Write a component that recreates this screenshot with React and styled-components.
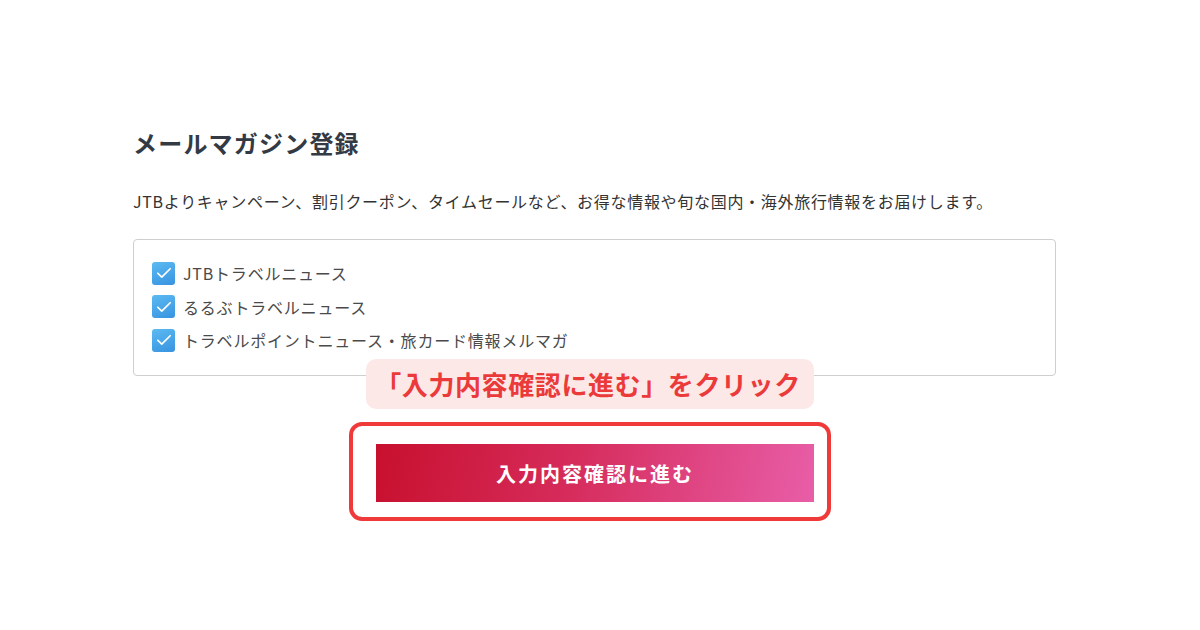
import React from 'react';
import styled, { createGlobalStyle } from 'styled-components';

const GlobalStyle = createGlobalStyle`
  body {
    margin: 0;
    background: #fff;
    font-family: "Noto Sans CJK JP", "Noto Sans", sans-serif;
  }
`;

const Page = styled.div`
  width: 1200px;
  height: 630px;
  padding: 125px 0 0 133px;
  box-sizing: border-box;
  overflow: hidden;
`;

const Section = styled.section`
  width: 923px;
`;

const Title = styled.h2`
  margin: 0;
  font-size: 24px;
  line-height: 36px;
  font-weight: 700;
  letter-spacing: 1.2px;
  color: #333a44;
`;

const Lead = styled.p`
  margin: 28px 0 26px;
  font-size: 16px;
  line-height: 24px;
  letter-spacing: 0.7px;
  color: #333;
`;

const OptionBox = styled.div`
  border: 1px solid #cfcfcf;
  border-radius: 4px;
  padding: 21px 18px 23px;
  display: flex;
  flex-direction: column;
  gap: 9.5px;
`;

const Option = styled.label`
  display: flex;
  align-items: center;
  gap: 8px;
  height: 24px;
  font-size: 16px;
  letter-spacing: 0.8px;
  color: #4a4a4a;
`;

const Box = styled.span`
  width: 23px;
  height: 23px;
  border-radius: 3px;
  background: linear-gradient(160deg, #5cbaf2, #3893e0);
  display: flex;
  align-items: center;
  justify-content: center;
`;

const ActionArea = styled.div`
  display: flex;
  flex-direction: column;
  align-items: center;
  padding-right: 9px;
`;

const Callout = styled.div`
  position: relative;
  z-index: 1;
  margin-top: -17px;
  height: 50px;
  padding: 0 13px 0 9px;
  border-radius: 10px;
  background: #fde8e8;
  color: #eb3a3a;
  font-size: 26px;
  font-weight: 700;
  letter-spacing: 0.6px;
  line-height: 50px;
  white-space: nowrap;
`;

const Highlight = styled.div`
  margin-top: 13px;
  border: 4px solid #f03a3a;
  border-radius: 13px;
  padding: 18px 13px 15px 23px;
`;

const SubmitButton = styled.button`
  display: block;
  width: 438px;
  height: 58px;
  border: none;
  background: linear-gradient(100deg, #c8102e 0%, #d62c5c 45%, #e85ea8 100%);
  color: #fff;
  font-family: inherit;
  font-size: 20px;
  font-weight: 700;
  letter-spacing: 2px;
  cursor: pointer;
`;

const Check = () => (
  <Box>
    <svg width="18" height="18" viewBox="0 0 16 16" fill="none">
      <path d="M2.5 8.2l3.5 3.5 7.5-7.5" stroke="#fff" strokeWidth="1.5" strokeLinecap="round" strokeLinejoin="round" />
    </svg>
  </Box>
);

const options = [
  'JTBトラベルニュース',
  'るるぶトラベルニュース',
  'トラベルポイントニュース・旅カード情報メルマガ',
];

export default function App() {
  return (
    <>
      <GlobalStyle />
      <Page>
        <Section>
          <Title>メールマガジン登録</Title>
          <Lead>
            JTBよりキャンペーン、割引クーポン、タイムセールなど、お得な情報や旬な国内・海外旅行情報をお届けします。
          </Lead>
          <OptionBox>
            {options.map(label => (
              <Option key={label}>
                <Check />
                {label}
              </Option>
            ))}
          </OptionBox>
          <ActionArea>
            <Callout>「入力内容確認に進む」をクリック</Callout>
            <Highlight>
              <SubmitButton>入力内容確認に進む</SubmitButton>
            </Highlight>
          </ActionArea>
        </Section>
      </Page>
    </>
  );
}
